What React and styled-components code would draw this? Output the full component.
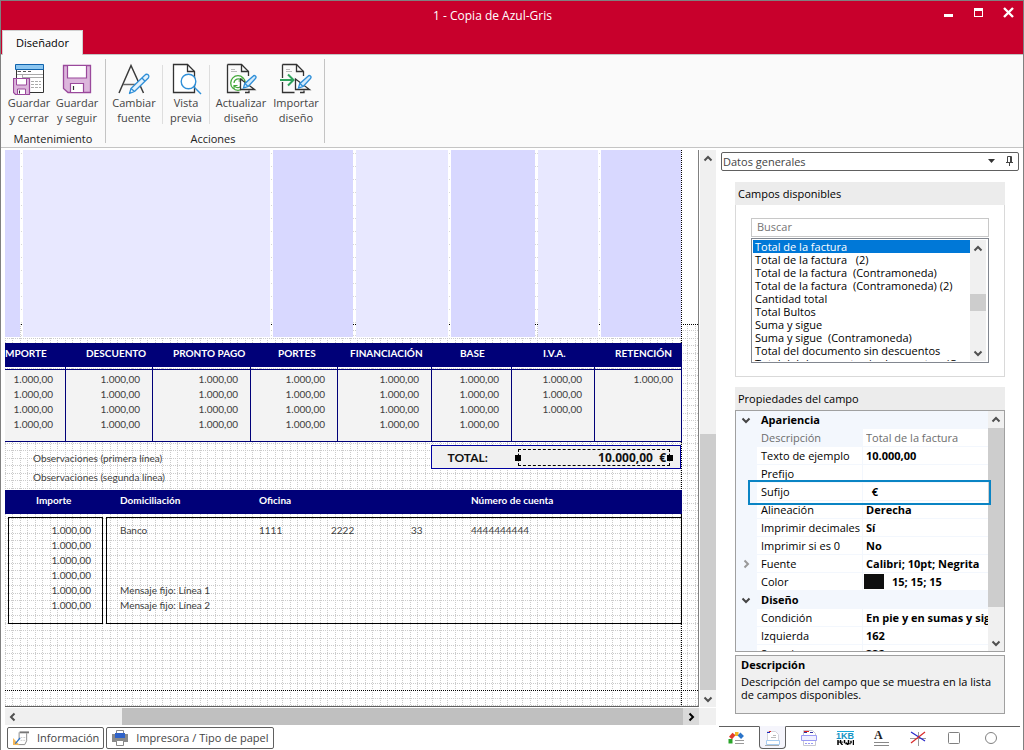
import React from 'react';
import styled, { createGlobalStyle, css } from 'styled-components';

const NAVY = '#000078';
const UI_FONT = "'Open Sans', 'Noto Sans', sans-serif";
const SHEET_FONT = "Lato, 'Open Sans', sans-serif";

const dot = (color) => `conic-gradient(from 270deg at 1px 1px, ${color} 90deg, transparent 0)`;

const GlobalStyle = createGlobalStyle`
  * {
    box-sizing: border-box;
  }

  body {
    margin: 0;
    background: #fff;
    color: #111;
    font-family: ${UI_FONT};
    font-size: 11px;
  }

  button,
  input,
  select {
    font: inherit;
    color: inherit;
    padding: 0;
    border: 0;
    background: none;
  }

  svg {
    display: block;
    flex: none;
  }
`;

/* ---------- window ---------- */

const Window = styled.div`
  min-height: 100vh;
  display: flex;
  flex-direction: column;
  border: 1px solid #808080;
  border-bottom: 0;
`;

const TitleBar = styled.header`
  display: flex;
  height: 29px;
  padding-left: 43px;
  background: #c8002c;
  color: #fff;
`;

const Title = styled.h1`
  flex: 1;
  margin: 0;
  font-size: 12px;
  font-weight: 400;
  line-height: 30px;
  text-align: center;
`;

const WindowControls = styled.div`
  display: flex;
  align-items: flex-start;
  gap: 14px;
  padding: 5px 6px 0 0;
`;

const WindowButton = styled.button`
  width: 16px;
  height: 16px;
`;

const TabBar = styled.nav`
  display: flex;
  height: 25px;
  padding-left: 1px;
  background: #c8002c;
  border-bottom: 1px solid #c4c4c4;
`;

const RibbonTab = styled.button`
  height: 25px;
  padding: 0 13px 2px;
  background: #fafafa;
  border: 1px solid #d0d0d0;
  border-bottom: 0;
  color: #000;
`;

const Ribbon = styled.div`
  display: flex;
  height: 93px;
  padding: 4px 0 4px 4px;
  background: #fafafa;
  border-bottom: 1px solid #c4c4c4;
`;

const RibbonGroup = styled.section`
  display: flex;
  flex-direction: column;
  justify-content: space-between;
  padding-right: 4px;
  border-right: 1px solid #c4c4c4;
`;

const RibbonButtons = styled.div`
  display: flex;
`;

const RibbonButton = styled.button`
  display: flex;
  flex-direction: column;
  align-items: center;
  width: ${({ $width }) => $width || 48}px;
  padding-top: 4px;
  line-height: 15px;
  color: #444;
  white-space: nowrap;
`;

const RibbonDivider = styled.span`
  width: 1px;
  height: 59px;
  margin-top: 6px;
  background: #dedede;
`;

const GroupLabel = styled.h2`
  margin: 0;
  font-size: 11px;
  font-weight: 400;
  line-height: 8px;
  text-align: center;
  color: #222;
`;

const Workspace = styled.main`
  flex: 1;
  display: flex;
  padding: 2px 0 0 4px;
`;

const Designer = styled.div`
  flex: 1;
  min-width: 0;
  display: flex;
  flex-direction: column;
`;

/* ---------- scroll bars ---------- */

const ScrollTrack = styled.div`
  display: flex;
  flex-direction: ${({ $horizontal }) => ($horizontal ? 'row' : 'column')};
  flex: ${({ $horizontal }) => ($horizontal ? '1' : 'none')};
  ${({ $horizontal }) => ($horizontal ? 'height' : 'width')}: ${({ $size }) => $size || 16}px;
  background: #f0f0f0;
`;

const ScrollButton = styled.button`
  display: flex;
  align-items: center;
  justify-content: center;
  flex: none;
  width: 16px;
  height: 17px;
  color: #505050;
  background: ${({ $active }) => ($active ? '#dadada' : 'transparent')};
`;

const ScrollSpace = styled.div`
  flex: ${({ $grow }) => $grow} 0 0;
`;

const ScrollThumb = styled(ScrollSpace)`
  background: ${({ $dark }) => ($dark ? '#c0c0c0' : '#cdcdcd')};
`;

const CHEVRONS = {
  up: 'M1.5 6.5 5 3l3.5 3.5',
  down: 'M1.5 3.5 5 7l3.5-3.5',
  left: 'M6.5 1.5 3 5l3.5 3.5',
  right: 'M3.5 1.5 7 5 3.5 8.5',
};

function Chevron({ to, color = 'currentColor' }) {
  return (
    <svg width="10" height="10" viewBox="0 0 10 10" fill="none" stroke={color} strokeWidth="2">
      <path d={CHEVRONS[to]} />
    </svg>
  );
}

function ScrollBar({ horizontal, size, before, thumb, after, dark }) {
  return (
    <ScrollTrack $horizontal={horizontal} $size={size}>
      <ScrollButton aria-label={horizontal ? 'Izquierda' : 'Arriba'}>
        <Chevron to={horizontal ? 'left' : 'up'} />
      </ScrollButton>
      <ScrollSpace $grow={before} />
      <ScrollThumb $grow={thumb} $dark={dark} />
      <ScrollSpace $grow={after} />
      <ScrollButton aria-label={horizontal ? 'Derecha' : 'Abajo'} $active={dark}>
        <Chevron to={horizontal ? 'right' : 'down'} color={dark ? '#000' : undefined} />
      </ScrollButton>
    </ScrollTrack>
  );
}

/* ---------- sheet ---------- */

const CanvasRow = styled.div`
  flex: 1;
  display: flex;
`;

const Canvas = styled.div`
  flex: 1;
  min-width: 0;
  margin-right: 1px;
  padding-right: 16px;
  border-right: 1px solid #808080;
  border-bottom: 1px solid #606060;
  font-family: ${SHEET_FONT};
  font-size: 10px;
  line-height: 15px;
  color: #404040;
  background-color: #fff;
  background-image: ${dot('#000')}, ${dot('#000')}, ${dot('#000')}, linear-gradient(#fff, #fff),
    ${dot('#cbcbcb')}, ${dot('#cbcbcb')}, ${dot('#cbcbcb')}, ${dot('#cbcbcb')};
  background-size: 2px 1px, 2px 1px, 1px 2px, 100% 174px, 15px 2px, 15px 2px, 2px 15px, 2px 15px;
  background-repeat: repeat-x, repeat-x, repeat-y, no-repeat, repeat, repeat, repeat, repeat;
  background-position: 0 174px, 0 540px, right 16px top 0, 0 0, 7px 0, 15px 0, 0 0, 0 8px;
`;

const BodyColumns = styled.div`
  display: grid;
  grid-template-columns: 15fr 247fr 80fr 92fr 84fr 60fr 80fr;
  gap: 3px;
  height: 187px;
  margin-right: 1px;
  background-image: ${dot('#d8d8d8')};
  background-size: 2px 13px;
  background-position: 0 3px;
`;

const BodyColumn = styled.div`
  background: ${({ $strong }) => ($strong ? '#d8d8ff' : '#e8e8ff')};
`;

const SheetTable = styled.table`
  width: 100%;
  table-layout: fixed;
  border-collapse: separate;
  border-spacing: 0;
`;

const HeadCell = styled.th`
  height: 24px;
  padding: 0 0 3px ${({ $indent }) => $indent}px;
  background: ${NAVY};
  color: #fff;
  font-weight: 700;
  text-align: left;
  white-space: nowrap;
`;

const TotalsTable = styled(SheetTable)`
  margin-top: 6px;

  td {
    padding: 0 12px 0 0;
    border-right: 1px solid ${NAVY};
    background: #f3f3f3;
    text-align: right;
  }

  td:last-child {
    padding-right: 8px;
  }

  tr.gap td {
    height: 3px;
    background: transparent;
    border-bottom: 1px solid ${NAVY};
  }

  tr.first td {
    padding-top: 2px;
  }

  tr:last-child td {
    padding-bottom: 9px;
    border-bottom: 1px solid ${NAVY};
  }
`;

const SheetFoot = styled.div`
  display: flex;
  justify-content: space-between;
  height: 48px;
`;

const Notes = styled.div`
  padding: 7px 0 0 28px;
  line-height: 19px;
`;

const TotalBox = styled.div`
  display: flex;
  align-items: center;
  justify-content: space-between;
  width: 37%;
  height: 24px;
  margin: 3px 1px 0 0;
  padding: 0 10px 0 16px;
  border: 1px solid #0000a0;
  background: #f0f0f0;
  color: #111;
  font-size: 12px;
  font-weight: 700;
`;

const SelectedField = styled.div`
  position: relative;
  width: 152px;
  height: 17px;
  padding-right: 3px;
  border: 1px dashed #000;
  font-family: ${UI_FONT};
  font-size: 12px;
  line-height: 15px;
  text-align: right;
  white-space: pre;
`;

const Handle = styled.span`
  position: absolute;
  top: 5px;
  ${({ $side }) => $side}: -4px;
  width: 6px;
  height: 6px;
  background: #000;
`;

const BankTable = styled(SheetTable)`
  td {
    padding: 0 0 0 14px;
    height: 15px;
  }

  tr.gap td {
    height: 3px;
  }

  tr.first td:not(.space) {
    padding-top: 5px;
    border-top: 1px solid #000;
  }

  tr:last-child td:not(.space) {
    padding-bottom: 10px;
    border-bottom: 1px solid #000;
  }

  td.amount {
    padding-left: 0;
    padding-right: 11px;
    border-left: 1px solid #000;
    border-right: 1px solid #000;
    text-align: right;
  }

  td.bank {
    padding-left: 13px;
    border-left: 1px solid #000;
    white-space: nowrap;
  }

  td:last-child {
    border-right: 1px solid #000;
  }
`;

const AMOUNT = '1.000,00';

const totals = [
  { title: 'MPORTE', width: 61, indent: 0, rows: 4 },
  { title: 'DESCUENTO', width: 87, indent: 20, rows: 4 },
  { title: 'PRONTO PAGO', width: 98, indent: 20, rows: 4 },
  { title: 'PORTES', width: 87, indent: 27, rows: 4 },
  { title: 'FINANCIACIÓN', width: 94, indent: 12, rows: 4 },
  { title: 'BASE', width: 80, indent: 28, rows: 4 },
  { title: 'I.V.A.', width: 83, indent: 31, rows: 3 },
  { title: 'RETENCIÓN', width: 87, indent: 20, rows: 1 },
];

const bankColumns = [
  { title: '', width: 3, indent: 0 },
  { title: 'Importe', width: 95, indent: 28 },
  { title: '', width: 3, indent: 0 },
  { title: 'Domiciliación', width: 139, indent: 14 },
  { title: 'Oficina', width: 72, indent: 14 },
  { title: '', width: 80, indent: 14 },
  { title: '', width: 60, indent: 14 },
  { title: 'Número de cuenta', width: 225, indent: 14 },
];

const bankRows = [
  ['Banco', '1111', '2222', '33', '4444444444'],
  ['', '', '', '', ''],
  ['', '', '', '', ''],
  ['', '', '', '', ''],
  ['Mensaje fijo: Línea 1', '', '', '', ''],
  ['Mensaje fijo: Línea 2', '', '', '', ''],
];

function Columns({ columns }) {
  return (
    <colgroup>
      {columns.map(({ width }, i) => (
        <col key={i} width={`${(width * 100) / 677}%`} />
      ))}
    </colgroup>
  );
}

function Head({ columns }) {
  return (
    <thead>
      <tr>
        {columns.map(({ title, indent }, i) => (
          <HeadCell key={i} $indent={indent}>
            {title}
          </HeadCell>
        ))}
      </tr>
    </thead>
  );
}

function Sheet() {
  return (
    <Canvas>
      <BodyColumns>
        {[true, false, true, false, true, false, true].map((strong, i) => (
          <BodyColumn key={i} $strong={strong} />
        ))}
      </BodyColumns>
      <TotalsTable>
        <Columns columns={totals} />
        <Head columns={totals} />
        <tbody>
          <tr className="gap">
            {totals.map(({ title }) => (
              <td key={title} />
            ))}
          </tr>
          {[0, 1, 2, 3].map((row) => (
            <tr key={row} className={row === 0 ? 'first' : undefined}>
              {totals.map(({ title, rows }) => (
                <td key={title}>{row < rows ? AMOUNT : ''}</td>
              ))}
            </tr>
          ))}
        </tbody>
      </TotalsTable>
      <SheetFoot>
        <Notes>
          <div>Observaciones (primera línea)</div>
          <div>Observaciones (segunda línea)</div>
        </Notes>
        <TotalBox>
          TOTAL:
          <SelectedField>
            {'10.000,00  €'}
            <Handle $side="left" />
            <Handle $side="right" />
          </SelectedField>
        </TotalBox>
      </SheetFoot>
      <BankTable>
        <Columns columns={bankColumns} />
        <Head columns={bankColumns} />
        <tbody>
          <tr className="gap">
            <td className="space" colSpan={7} />
            <td className="space" />
          </tr>
          {bankRows.map(([bank, ...rest], i) => (
            <tr key={i} className={i === 0 ? 'first' : undefined}>
              <td className="space" />
              <td className="amount">{AMOUNT}</td>
              <td className="space" />
              <td className="bank">{bank}</td>
              {rest.map((value, j) => (
                <td key={j}>{value}</td>
              ))}
            </tr>
          ))}
        </tbody>
      </BankTable>
    </Canvas>
  );
}

const HorizontalScroll = styled.div`
  display: flex;
  margin-top: 1px;
  background: #f0f0f0;
  padding-right: 17px;
`;

const StatusTabs = styled.footer`
  display: flex;
  gap: 2px;
  padding: 2px 0 1px 2px;
`;

const StatusTab = styled.button`
  display: flex;
  align-items: center;
  gap: 8px;
  height: 22px;
  padding: 0 4px 1px 5px;
  border: 1px solid #606060;
  border-radius: 2px;
  background: #fff;
  color: #444;
`;

/* ---------- side panel ---------- */

const SidePanel = styled.aside`
  display: flex;
  flex-direction: column;
  width: 307px;
  padding-left: 2px;
`;

const Combo = styled.div`
  display: flex;
  align-items: center;
  height: 19px;
  margin: 2px 4px 0 3px;
  padding: 0 4px 1px 1px;
  border: 1px solid #606060;
  border-radius: 2px;
  gap: 10px;

  select {
    flex: 1;
    appearance: none;
    color: #444;
  }

  button {
    width: 9px;
  }
`;

const Section = styled.section`
  margin: ${({ $top }) => $top}px 18px 0 17px;
`;

const SectionTitle = styled.h2`
  margin: 0;
  padding-left: 3px;
  background: #ececec;
  font-size: 11px;
  font-weight: 400;
  line-height: 23px;
  color: #000;
`;

const SectionBody = styled.div`
  padding: 13px 15px;
  border: 1px solid #d9d9d9;
  border-top: 0;
`;

const Search = styled.input`
  display: block;
  width: 100%;
  height: 19px;
  padding: 0 5px 2px;
  border: 1px solid #c8c8c8;

  &::placeholder {
    color: #757575;
    opacity: 1;
  }
`;

const ListBox = styled.div`
  display: flex;
  height: 125px;
  margin-top: 1px;
  padding: 1px 2px 1px 1px;
  border: 1px solid #828790;
`;

const Options = styled.ul`
  flex: 1;
  margin: 0;
  padding: 0;
  overflow: hidden;
  list-style: none;
  line-height: 13px;
  white-space: pre;
  color: #000;
`;

const Option = styled.li`
  padding-left: 2px;

  ${({ $selected }) =>
    $selected &&
    css`
      background: #0078d7;
      color: #fff;
    `}
`;

const fields = [
  'Total de la factura',
  'Total de la factura   (2)',
  'Total de la factura  (Contramoneda)',
  'Total de la factura  (Contramoneda) (2)',
  'Cantidad total',
  'Total Bultos',
  'Suma y sigue',
  'Suma y sigue  (Contramoneda)',
  'Total del documento sin descuentos',
  'Total del documento sin descuentos  (C',
];

const PropertyGrid = styled.div`
  position: relative;
  display: flex;
  height: 242px;
  border: 1px solid #a0a0a0;
`;

const PropertyRows = styled.div`
  flex: 1;
  min-width: 0;
  overflow: hidden;
  background: #f3f7fd;
  color: #000;
`;

const PropertyRow = styled.div`
  display: grid;
  grid-template-columns: 20px 105px minmax(0, 1fr);
  column-gap: 1px;
  height: 18px;
  padding-bottom: 1px;
  color: ${({ $muted }) => ($muted ? '#6d6d6d' : '#000')};

  > span {
    display: flex;
    align-items: center;
    justify-content: center;
  }

  label {
    padding-left: 4px;
    line-height: 17px;
    white-space: nowrap;
    background: ${({ $muted }) => ($muted ? 'transparent' : '#fff')};
  }

  strong {
    padding-left: 4px;
    line-height: 17px;
  }
`;

const Value = styled.div`
  display: flex;
  align-items: center;
  gap: 8px;
  padding-left: ${({ $swatch }) => ($swatch ? 1 : 3)}px;
  background: #fff;

  input {
    flex: 1;
    min-width: 0;
    height: 17px;
    font-weight: ${({ $plain }) => ($plain ? 400 : 700)};
    color: inherit;
  }
`;

const Swatch = styled.span`
  width: 20px;
  height: 15px;
  background: #0f0f0f;
`;

// Frame that calls attention to one property, drawn over the grid.
const Highlight = styled.div`
  position: absolute;
  top: 69px;
  left: 12px;
  right: 13px;
  height: 25px;
  border: 2px solid #0a84c4;
  pointer-events: none;
`;

const properties = [
  { group: 'Apariencia' },
  { name: 'Descripción', value: 'Total de la factura', muted: true },
  { name: 'Texto de ejemplo', value: '10.000,00' },
  { name: 'Prefijo', value: '' },
  { name: 'Sufijo', value: '  €' },
  { name: 'Alineación', value: 'Derecha' },
  { name: 'Imprimir decimales', value: 'Sí' },
  { name: 'Imprimir si es 0', value: 'No' },
  { name: 'Fuente', value: 'Calibri; 10pt; Negrita', expandable: true },
  { name: 'Color', value: '15; 15; 15', swatch: true },
  { group: 'Diseño' },
  { name: 'Condición', value: 'En pie y en sumas y sigue' },
  { name: 'Izquierda', value: '162' },
  { name: 'Superior', value: '332' },
];

function Property({ group, name, value, muted, expandable, swatch }) {
  if (group) {
    return (
      <PropertyRow>
        <span>
          <Chevron to="down" color="#444" />
        </span>
        <strong>{group}</strong>
      </PropertyRow>
    );
  }
  const id = `prop-${name.toLowerCase().replace(/ /g, '-')}`;
  return (
    <PropertyRow $muted={muted}>
      <span>{expandable && <Chevron to="right" color="#999" />}</span>
      <label htmlFor={id}>{name}</label>
      <Value $plain={muted} $swatch={swatch}>
        {swatch && <Swatch />}
        <input id={id} defaultValue={value} readOnly={muted} />
      </Value>
    </PropertyRow>
  );
}

const HelpBox = styled.div`
  min-height: 59px;
  margin-top: 3px;
  padding: 1px 5px;
  border: 1px solid #a0a0a0;
  background: #f0f0f0;
  line-height: 13px;
  color: #000;

  strong {
    display: block;
    margin-bottom: 3px;
    line-height: 15px;
  }

  p {
    margin: 0;
  }
`;

const ToolTabs = styled.nav`
  display: flex;
  margin: 12px 3px 0 1px;
  padding-right: 11px;
  border-top: 1px solid #606060;
`;

const ToolTab = styled.button`
  display: flex;
  align-items: center;
  justify-content: center;
  flex: 1;
  height: 22px;

  ${({ $active }) =>
    $active &&
    css`
      flex: none;
      width: 27px;
      height: 23px;
      margin: -1px 4px 0;
      background: #f5f5fc;
      border: 1px solid #606060;
      border-top-color: #f5f5fc;
      border-radius: 0 0 4px 4px;
    `}
`;

/* ---------- icons ---------- */

const SaveCloseIcon = () => (
  <svg width="32" height="32" viewBox="0 0 32 32" fill="none">
    <path d="M3.5 5v24.500h27V5z" fill="#fff" stroke="#333" />
    <path d="M2.500 1.500h28v5h-28z" fill="#8cc6f0" stroke="#0f63ad" />
    <path d="M4.500 8.500H8M10 8.500h3M15 8.500h3" stroke="#555" />
    <path d="M4 11.500h26M9.500 12v3M9 14.500h21" stroke="#aaa" />
    <path d="M18 18.500h10M18 21.500h10M18 24.500h10" stroke="#aaa" strokeDasharray="3 1" />
    <path d="M.500 15.500h16v16h-14l-2-2z" fill="#dcb6dc" stroke="#9a499c" strokeWidth="1.200" />
    <path d="M3.500 15.500h10v6.500h-10zM4.500 26h8v5.500h-8z" fill="#fff" stroke="#9a499c" />
    <path d="M6.500 27.500v3" stroke="#333" />
  </svg>
);

const SaveIcon = () => (
  <svg width="32" height="32" viewBox="0 0 32 32" fill="none">
    <path d="M2.500 2.500h27v27H7l-4.500-4z" fill="#dcb6dc" stroke="#9a499c" strokeWidth="1.300" />
    <path d="M6.500 2.500h19v12.500h-19zM9.500 20.500h13v9h-13z" fill="#fff" stroke="#9a499c" strokeWidth="1.200" />
    <path d="M12.500 23v4" stroke="#333" strokeWidth="1.200" />
  </svg>
);

const FontIcon = () => (
  <svg width="32" height="32" viewBox="0 0 32 32" fill="none">
    <path d="M1 30 13 2.500 25.500 30" stroke="#3a3a3a" strokeWidth="1.500" />
    <path d="M5 21.500h17" stroke="#666" strokeWidth="1.500" />
    <path
      d="M11.500 30.500 13 25.500 27 12a2.200 2.200 0 0 1 3.300 3L16.500 28.500z"
      fill="#e4f2fc"
      stroke="#2f8fd8"
      strokeWidth="1.300"
      strokeLinejoin="round"
    />
    <path d="m24 15 3 3.200M13 25.500l3.500 3" stroke="#2f8fd8" strokeWidth="1.300" />
  </svg>
);

const PreviewIcon = () => (
  <svg width="32" height="32" viewBox="0 0 32 32" fill="none">
    <path d="M3.500 1.500h14l7 7v21h-21z" fill="#fff" stroke="#333" strokeWidth="1.300" />
    <path d="M17.500 1.500v7h7" stroke="#333" strokeWidth="1.300" />
    <circle cx="18.500" cy="18.500" r="7.300" fill="#fff" stroke="#2f8fd8" strokeWidth="1.400" />
    <path d="m24 24 7 7" stroke="#2f8fd8" strokeWidth="1.400" />
  </svg>
);

const DesignPage = ({ children }) => (
  <svg width="32" height="32" viewBox="0 0 32 32" fill="none">
    <path d="M2.500 1.500h14l7 7V13M2.500 1.500v28h12M20 29.500h4v-2" stroke="#333" strokeWidth="1.300" />
    <path d="M16.500 1.500v7h7" stroke="#333" strokeWidth="1.300" />
    <path d="M6 6.500h4M6 8.500h6" stroke="#bbb" />
    {children}
    <path d="M15.500 16v10.500h14z" fill="#fff" stroke="#333" strokeWidth="1.300" />
    <path
      d="m18.500 25 1.200-4.300 8.300-7.500a1.600 1.600 0 0 1 2.500 2.300l-7.300 8z"
      fill="#d3eafb"
      stroke="#2f8fd8"
      strokeWidth="1.300"
    />
    <path d="m20 20.500 3 3" stroke="#2f8fd8" strokeWidth="1.200" />
  </svg>
);

const UpdateIcon = () => (
  <DesignPage>
    <circle cx="13" cy="20" r="7.300" fill="#fff" stroke="#44a83a" strokeWidth="1.300" />
    <path
      d="M9 20a4.200 4.200 0 0 1 7.500-2.500M17 14.500v3.500h-3.500M17 21a4.200 4.200 0 0 1-7.500 2M9 26v-3.500h3.500"
      stroke="#44a83a"
      strokeWidth="1.200"
    />
  </DesignPage>
);

const ImportIcon = () => (
  <DesignPage>
    <path d="M0 17h13M8 11.500l5.500 5.500L8 22.500" stroke="#fafafa" strokeWidth="4" />
    <path d="M0 17h13M8 11.500l5.500 5.500L8 22.500" stroke="#2fa35c" strokeWidth="2" />
  </DesignPage>
);

const NoteIcon = () => (
  <svg width="16" height="18" viewBox="0 0 17 18" fill="none">
    <path d="M7 3h10" stroke="#777" strokeWidth="2" />
    <path d="M6.500 3v7M14.500 4v8l-2 4H5" stroke="#888" />
    <path d="M8 8.500h5M8 11.500h5" stroke="#ccc" strokeDasharray="2 1" />
    <path d="M0 9v7.500h7z" fill="#f3b85a" />
    <path d="m2.500 15 5-6" stroke="#2a6fc2" strokeWidth="1.300" />
  </svg>
);

const PrinterIcon = () => (
  <svg width="16" height="16" viewBox="0 0 16 16" fill="none">
    <path d="M4.500.500h7v5h-7z" fill="#fff" stroke="#888" />
    <path d="M0 4h3v4h10V4h3v8H0z" fill="#8a8a8a" />
    <path d="M3 3h10v5H3z" fill="#2f62c8" />
    <path d="M4.500 10.500h7v5h-7z" fill="#fff" stroke="#888" />
  </svg>
);

const GaugeIcon = () => (
  <svg width="18" height="16" viewBox="0 0 18 16" fill="none">
    <path d="M2.500 13.500V9" stroke="#2aa52a" strokeWidth="4" />
    <path d="M2.500 8 6 4" stroke="#e23b2a" strokeWidth="4" />
    <path d="M7 4h3.500" stroke="#f2b824" strokeWidth="4" />
    <path d="m11 4 3.500 3.500" stroke="#2b74c9" strokeWidth="4" />
    <path d="M7 10.500h9M7 13.500h9" stroke="#999" />
  </svg>
);

const PageTabIcon = () => (
  <svg width="16" height="16" viewBox="0 0 16 16" fill="none">
    <path d="M2.500 1.500h8l3 3v7h-11z" fill="#fff" stroke="#d4d4dc" />
    <path d="M2 2.500h3" stroke="#2030c0" />
    <path d="M4 1.500h2" stroke="#e02020" />
    <path d="M8 5.500h3M6 7.500h5" stroke="#bbb" />
    <path d="M1.500 10.500h13v4h-13z" stroke="#a8ccf0" fill="#fff" />
    <path d="M0 15.500h14" stroke="#aaa" />
  </svg>
);

const BandTabIcon = () => (
  <svg width="16" height="16" viewBox="0 0 16 16" fill="none">
    <path d="M2.500.500h9l3 3v12h-12z" fill="#fff" stroke="#c8c8d0" />
    <path d="M3 1.500h5" stroke="#e02020" />
    <path d="M3 2.500h3M9 2.500h3" stroke="#3030a0" />
    <path d="M.500 5.500h15v5H.500z" fill="#f0f0ff" stroke="#9a9af4" />
    <path d="M4 13.500h9" stroke="#9a9af4" strokeDasharray="2 1" />
  </svg>
);

const BarcodeMark = styled.span`
  display: flex;
  flex-direction: column;
  align-items: center;
  width: 17px;
  border-top: 1px solid #1ba7d8;
  color: #1593c4;
  font: 700 9px/8px 'Liberation Sans', sans-serif;
`;

const Bars = () => (
  <svg width="17" height="5" viewBox="0 0 17 6" preserveAspectRatio="none" stroke="#000" fill="none">
    <path d="M1 0v6M3.500 0v3l2 3M7.500 0v4M9 3l2 3M11.500 0v5M14 1v3M16.500 0v6" strokeWidth="1.500" />
    <path d="M1 2.500h5M8 4.500h6" />
  </svg>
);

const LetterMark = styled.span`
  width: 15px;
  height: 16px;
  border-bottom: 4px double #888;
  color: #222;
  font: 700 12px/10px 'Liberation Serif', serif;
  text-align: left;
`;

const LinesIcon = () => (
  <svg width="16" height="16" viewBox="0 0 16 16" fill="none">
    <path d="M0 8.500h16M8.500 2v14" stroke="#999" />
    <path d="m1 2 14 9" stroke="#2828c8" strokeWidth="1.200" />
    <path d="M15 2 1 13" stroke="#d82828" strokeWidth="1.200" />
  </svg>
);

const ShapeIcon = ({ round }) => (
  <svg width="12" height="12" viewBox="0 0 12 12" fill="#fff" stroke="#808080">
    <rect x=".5" y=".5" width="11" height="11" rx={round ? 5.5 : 1} />
  </svg>
);

export default function App() {
  return (
    <Window>
      <GlobalStyle />
      <TitleBar>
        <Title>1 - Copia de Azul-Gris</Title>
        <WindowControls>
          <WindowButton aria-label="Minimizar">
            <svg width="16" height="16" viewBox="0 0 16 16">
              <path d="M3 8h9v3H3z" fill="#fff" />
            </svg>
          </WindowButton>
          <WindowButton aria-label="Maximizar">
            <svg width="16" height="16" viewBox="0 0 16 16">
              <path d="M3 2h9v9H3zM4 5v5h7V5z" fill="#fff" fillRule="evenodd" />
            </svg>
          </WindowButton>
          <WindowButton aria-label="Cerrar">
            <svg width="16" height="16" viewBox="0 0 16 16" stroke="#fff" strokeWidth="2.400">
              <path d="m3 2 9 9M12 2l-9 9" />
            </svg>
          </WindowButton>
        </WindowControls>
      </TitleBar>
      <TabBar>
        <RibbonTab>Diseñador</RibbonTab>
      </TabBar>
      <Ribbon>
        <RibbonGroup>
          <RibbonButtons>
            <RibbonButton>
              <SaveCloseIcon />
              Guardar
              <br />y cerrar
            </RibbonButton>
            <RibbonButton>
              <SaveIcon />
              Guardar
              <br />y seguir
            </RibbonButton>
          </RibbonButtons>
          <GroupLabel>Mantenimiento</GroupLabel>
        </RibbonGroup>
        <RibbonGroup>
          <RibbonButtons>
            <RibbonButton $width={56}>
              <FontIcon />
              Cambiar
              <br />
              fuente
            </RibbonButton>
            <RibbonDivider />
            <RibbonButton $width={46}>
              <PreviewIcon />
              Vista
              <br />
              previa
            </RibbonButton>
            <RibbonDivider />
            <RibbonButton $width={62}>
              <UpdateIcon />
              Actualizar
              <br />
              diseño
            </RibbonButton>
            <RibbonButton>
              <ImportIcon />
              Importar
              <br />
              diseño
            </RibbonButton>
          </RibbonButtons>
          <GroupLabel>Acciones</GroupLabel>
        </RibbonGroup>
      </Ribbon>
      <Workspace>
        <Designer>
          <CanvasRow>
            <Sheet />
            <ScrollBar before={268} thumb={257} after={0} />
          </CanvasRow>
          <HorizontalScroll>
            <ScrollBar horizontal size={17} before={101} thumb={560} after={0} dark />
          </HorizontalScroll>
          <StatusTabs>
            <StatusTab>
              <NoteIcon />
              Información
            </StatusTab>
            <StatusTab>
              <PrinterIcon />
              Impresora / Tipo de papel
            </StatusTab>
          </StatusTabs>
        </Designer>
        <SidePanel>
          <Combo>
            <select aria-label="Sección" defaultValue="general">
              <option value="general">Datos generales</option>
            </select>
            <svg width="7" height="4" viewBox="0 0 7 4">
              <path d="M0 0h7L3.500 4z" fill="#333" />
            </svg>
            <button aria-label="Fijar panel">
              <svg width="9" height="10" viewBox="0 0 9 10" fill="none" stroke="#444">
                <path d="M2.500 6V.500h4V6M5.500 1v5M1 6.500h7M4.500 7v3" />
              </svg>
            </button>
          </Combo>
          <Section $top={11}>
            <SectionTitle>Campos disponibles</SectionTitle>
            <SectionBody>
              <Search type="search" placeholder="Buscar" aria-label="Buscar" />
              <ListBox>
                <Options role="listbox" aria-label="Campos disponibles">
                  {fields.map((field, i) => (
                    <Option key={field} role="option" aria-selected={i === 0} $selected={i === 0}>
                      {field}
                    </Option>
                  ))}
                </Options>
                <ScrollBar before={37} thumb={17} after={33} />
              </ListBox>
            </SectionBody>
          </Section>
          <Section $top={10}>
            <SectionTitle>Propiedades del campo</SectionTitle>
            <PropertyGrid>
              <PropertyRows>
                {properties.map((property) => (
                  <Property key={property.group || property.name} {...property} />
                ))}
              </PropertyRows>
              <ScrollBar before={0} thumb={179} after={27} />
              <Highlight />
            </PropertyGrid>
            <HelpBox>
              <strong>Descripción</strong>
              <p>Descripción del campo que se muestra en la lista de campos disponibles.</p>
            </HelpBox>
          </Section>
          <ToolTabs>
            <ToolTab aria-label="Datos generales">
              <GaugeIcon />
            </ToolTab>
            <ToolTab aria-label="Página" $active>
              <PageTabIcon />
            </ToolTab>
            <ToolTab aria-label="Bandas">
              <BandTabIcon />
            </ToolTab>
            <ToolTab aria-label="Código de barras">
              <BarcodeMark>
                1KB
                <Bars />
              </BarcodeMark>
            </ToolTab>
            <ToolTab aria-label="Texto">
              <LetterMark>A</LetterMark>
            </ToolTab>
            <ToolTab aria-label="Líneas">
              <LinesIcon />
            </ToolTab>
            <ToolTab aria-label="Rectángulo">
              <ShapeIcon />
            </ToolTab>
            <ToolTab aria-label="Elipse">
              <ShapeIcon round />
            </ToolTab>
          </ToolTabs>
        </SidePanel>
      </Workspace>
    </Window>
  );
}
